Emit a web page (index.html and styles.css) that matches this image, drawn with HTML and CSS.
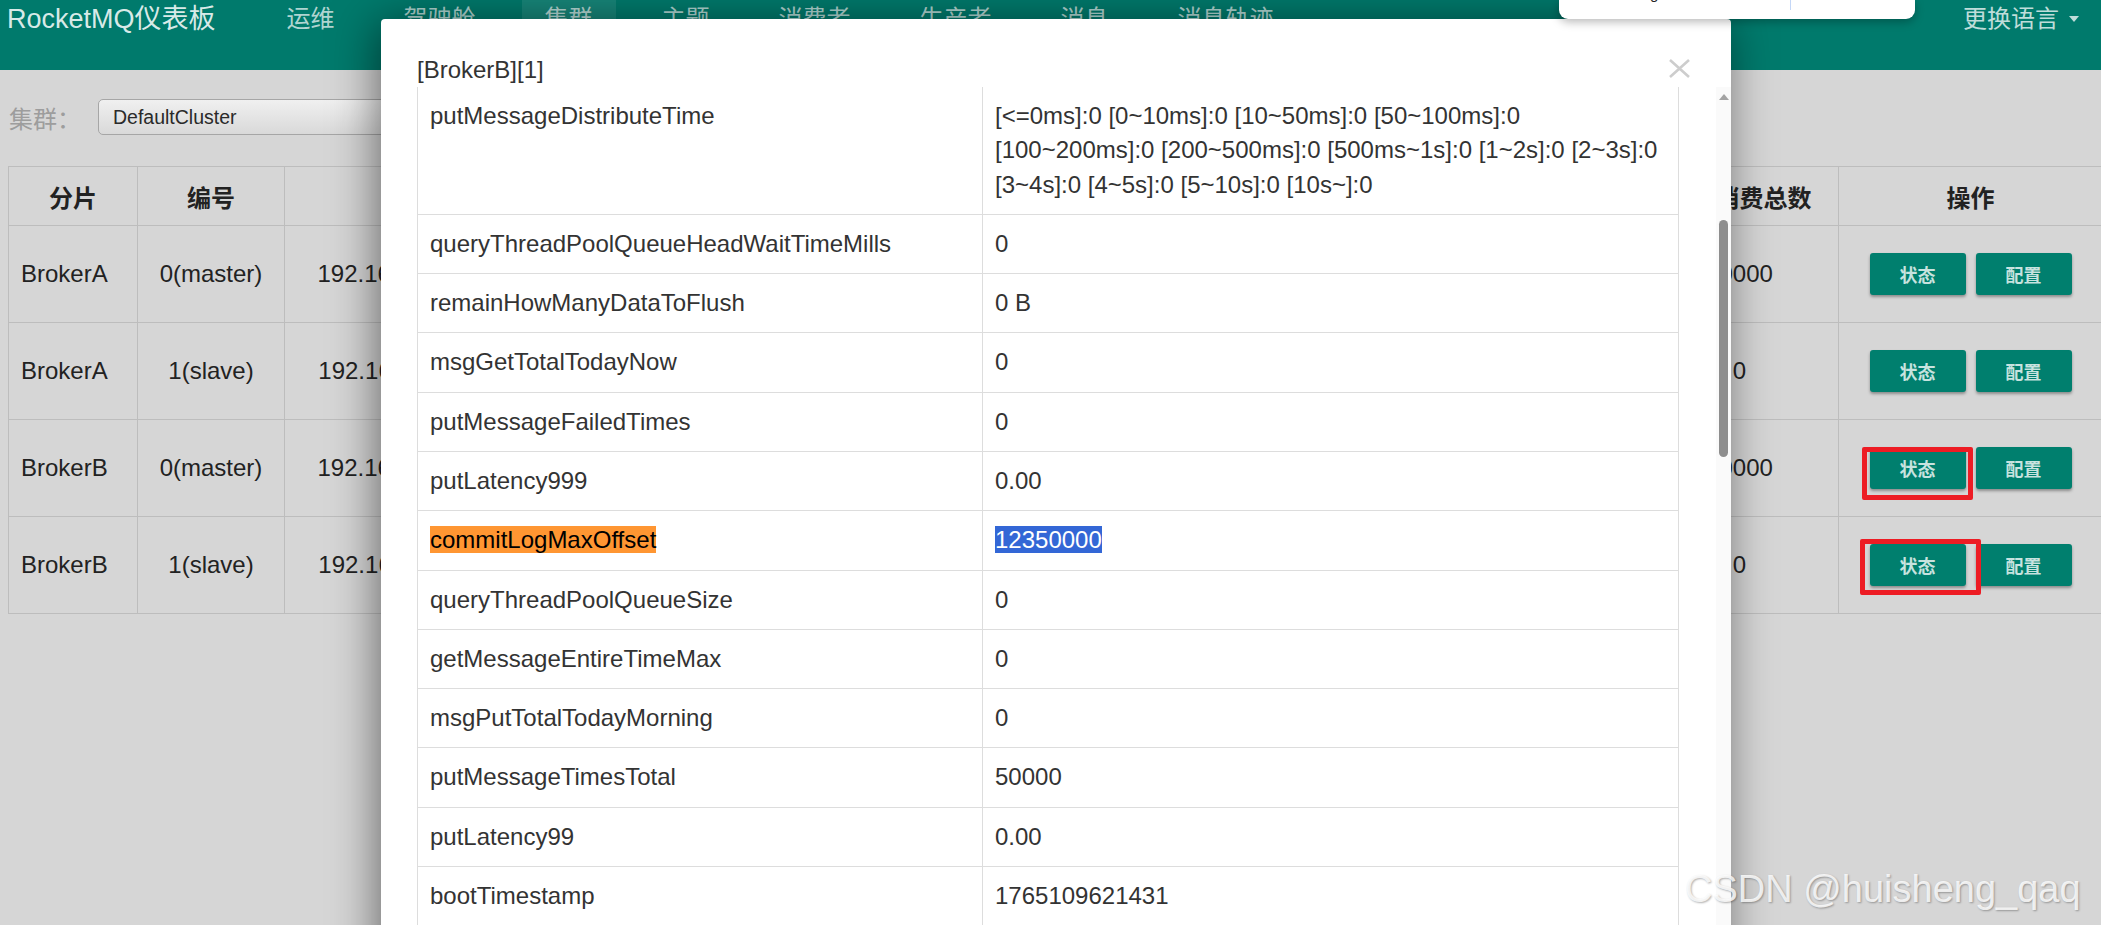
FILE: index.html
```html
<!DOCTYPE html>
<html lang="zh-CN">
<head>
<meta charset="utf-8">
<title>RocketMQ仪表板</title>
<link rel="stylesheet" href="styles.css">
</head>
<body>
<header class="navbar">
  <div class="brand">RocketMQ仪表板</div>
  <nav class="nav">
    <a class="nav-item">运维</a>
    <a class="nav-item">驾驶舱</a>
    <a class="nav-item active">集群</a>
    <a class="nav-item">主题</a>
    <a class="nav-item">消费者</a>
    <a class="nav-item">生产者</a>
    <a class="nav-item">消息</a>
    <a class="nav-item">消息轨迹</a>
  </nav>
  <div class="lang">更换语言<span class="caret"></span></div>
</header>

<main class="content">
  <div class="filter">
    <label class="filter-label">集群：</label>
    <div class="select">DefaultCluster</div>
  </div>
  <table class="cluster">
    <colgroup>
      <col class="c-shard"><col class="c-no"><col class="c-addr"><col class="c-mid"><col class="c-mid"><col class="c-mid"><col class="c-mid"><col class="c-mid"><col class="c-mid"><col class="c-today"><col class="c-ops">
    </colgroup>
    <thead>
      <tr><th>分片</th><th>编号</th><th>地址</th><th>版本</th><th>生产消息TPS</th><th>消费消息TPS</th><th>昨日生产总数</th><th>昨日消费总数</th><th>今天生产总数</th><th>今天消费总数</th><th>操作</th></tr>
    </thead>
    <tbody>
      <tr><td class="name">BrokerA</td><td>0(master)</td><td>192.168.0.105:10911</td><td>V5_3_2</td><td>0.00</td><td>0.00</td><td>0</td><td>0</td><td>50000</td><td>50000</td><td><div class="ops"><span class="btn">状态</span><span class="btn">配置</span></div></td></tr>
      <tr><td class="name">BrokerA</td><td>1(slave)</td><td>192.168.0.105:11011</td><td>V5_3_2</td><td>0.00</td><td>0.00</td><td>0</td><td>0</td><td>0</td><td>0</td><td><div class="ops"><span class="btn">状态</span><span class="btn">配置</span></div></td></tr>
      <tr><td class="name">BrokerB</td><td>0(master)</td><td>192.168.0.106:10911</td><td>V5_3_2</td><td>0.00</td><td>0.00</td><td>0</td><td>0</td><td>50000</td><td>50000</td><td><div class="ops"><span class="btn">状态</span><span class="btn">配置</span></div></td></tr>
      <tr><td class="name">BrokerB</td><td>1(slave)</td><td>192.168.0.106:11011</td><td>V5_3_2</td><td>0.00</td><td>0.00</td><td>0</td><td>0</td><td>0</td><td>0</td><td><div class="ops"><span class="btn">状态</span><span class="btn">配置</span></div></td></tr>
    </tbody>
  </table>
</main>

<div class="modal">
  <div class="modal-header">
    <div class="modal-title">[BrokerB][1]</div>
    <svg class="close" width="21" height="19" viewBox="0 0 21 19"><path d="M1 1 L20 18 M20 1 L1 18" stroke="#cdcdcd" stroke-width="2.6" fill="none"/></svg>
  </div>
  <div class="modal-body">
    <div class="modal-scroll">
      <table class="stats">
        <colgroup><col class="key"><col></colgroup>
        <tbody>
          <tr><td>putMessageDistributeTime</td><td>[&lt;=0ms]:0 [0~10ms]:0 [10~50ms]:0 [50~100ms]:0 [100~200ms]:0 [200~500ms]:0 [500ms~1s]:0 [1~2s]:0 [2~3s]:0 [3~4s]:0 [4~5s]:0 [5~10s]:0 [10s~]:0</td></tr>
          <tr><td>queryThreadPoolQueueHeadWaitTimeMills</td><td>0</td></tr>
          <tr><td>remainHowManyDataToFlush</td><td>0 B</td></tr>
          <tr><td>msgGetTotalTodayNow</td><td>0</td></tr>
          <tr><td>putMessageFailedTimes</td><td>0</td></tr>
          <tr><td>putLatency999</td><td>0.00</td></tr>
          <tr><td><mark class="find">commitLogMaxOffset</mark></td><td><span class="selected">12350000</span></td></tr>
          <tr><td>queryThreadPoolQueueSize</td><td>0</td></tr>
          <tr><td>getMessageEntireTimeMax</td><td>0</td></tr>
          <tr><td>msgPutTotalTodayMorning</td><td>0</td></tr>
          <tr><td>putMessageTimesTotal</td><td>50000</td></tr>
          <tr><td>putLatency99</td><td>0.00</td></tr>
          <tr><td>bootTimestamp</td><td>1765109621431</td></tr>
          <tr><td>msgGetTotalYesterdayMorning</td><td>0</td></tr>
        </tbody>
      </table>
    </div>
    <div class="scrollbar">
      <span class="sb-arrow"></span>
      <span class="sb-thumb"></span>
    </div>
  </div>
</div>

<div class="findbar">
  <span class="find-text">commitLogMaxOffset</span>
  <span class="find-sep"></span>
</div>

<div class="annot annot-1"></div>
<div class="annot annot-2"></div>

<div class="watermark">CSDN @huisheng_qaq</div>
</body>
</html>
```

FILE: styles.css
```css
* { box-sizing: border-box; }

html, body {
  margin: 0;
  height: 100%;
}

body {
  position: relative;
  overflow: hidden;
  background: #d6d6d6;
  color: #222;
  font-family: "Liberation Sans", "Noto Sans CJK SC", sans-serif;
}

/* ---------- navbar ---------- */
.navbar {
  height: 70px;
  background: #007a6c;
  display: flex;
  align-items: flex-start;
}

.brand {
  padding-left: 7px;
  font-size: 27px;
  line-height: 38px;
  color: rgba(255, 255, 255, 0.86);
  white-space: nowrap;
}

.nav {
  display: flex;
  gap: 23px;
  margin-left: 48px;
}

.nav-item {
  height: 70px;
  padding: 0 23px;
  font-size: 24px;
  line-height: 38px;
  color: rgba(255, 255, 255, 0.7);
  white-space: nowrap;
}

.nav-item.active {
  background: #178679;
}

.lang {
  margin-left: auto;
  padding-right: 22px;
  display: flex;
  align-items: center;
  gap: 10px;
  font-size: 24px;
  line-height: 38px;
  color: rgba(255, 255, 255, 0.75);
}

.caret {
  width: 0;
  height: 0;
  border-left: 5.5px solid transparent;
  border-right: 5.5px solid transparent;
  border-top: 6px solid rgba(255, 255, 255, 0.75);
}

/* ---------- page content ---------- */
.content {
  padding: 29px 0 0 8px;
}

.filter {
  display: flex;
  align-items: center;
  height: 36px;
}

.filter-label {
  width: 89px;
  margin-left: 1px;
  font-size: 24px;
  color: #9d9d9d;
}

.select {
  width: 420px;
  height: 36px;
  padding-left: 14px;
  border: 1px solid #a6a6a6;
  border-radius: 5px;
  background: linear-gradient(#f0f0f0, #d9d9d9);
  font-size: 19.5px;
  line-height: 34px;
  color: #2a2a2a;
}

.cluster {
  margin-top: 31px;
  width: 2094px;
  table-layout: fixed;
  border-collapse: collapse;
  font-size: 24px;
  color: #222;
}

.c-shard { width: 129px; }
.c-no { width: 147px; }
.c-addr { width: 291px; }
.c-mid { width: 177.5px; }
.c-today { width: 198px; }
.c-ops { width: 264px; }

.cluster th,
.cluster td {
  border: 1px solid #bdbdbd;
  padding: 0 12px;
  text-align: center;
  white-space: nowrap;
  overflow: hidden;
}

.cluster th {
  height: 59px;
  font-weight: bold;
}

.cluster td {
  height: 97px;
}

.cluster td.name {
  text-align: left;
}

.ops {
  display: flex;
  justify-content: center;
  gap: 10px;
}

.btn {
  width: 96px;
  height: 42px;
  display: flex;
  align-items: center;
  justify-content: center;
  background: #007f6e;
  color: rgba(255, 255, 255, 0.78);
  font-size: 18px;
  font-weight: bold;
  border-radius: 3px;
  box-shadow: 0 2px 3px rgba(0, 0, 0, 0.35);
}

/* ---------- modal ---------- */
.modal {
  position: absolute;
  left: 381px;
  top: 19px;
  width: 1350px;
  height: 1000px;
  z-index: 10;
  display: flex;
  flex-direction: column;
  background: #fff;
  border-radius: 4px;
  box-shadow: -4px 4px 45px rgba(0, 0, 0, 0.5);
}

.modal-header {
  display: flex;
  justify-content: space-between;
  align-items: flex-start;
  padding: 34px 41px 0 36px;
}

.modal-title {
  font-size: 24px;
  line-height: 34px;
  color: #333;
}

.close {
  margin-top: 6px;
}

.modal-body {
  flex: 1;
  min-height: 0;
  display: flex;
}

.modal-scroll {
  flex: 1;
  padding: 0 37px 0 36px;
  overflow: hidden;
}

.scrollbar {
  width: 15px;
  display: flex;
  flex-direction: column;
  align-items: center;
  background: #fafafa;
}

.sb-arrow {
  margin-top: 7px;
  width: 0;
  height: 0;
  border-left: 5px solid transparent;
  border-right: 5px solid transparent;
  border-bottom: 6px solid #a3a3a3;
}

.sb-thumb {
  margin-top: 120px;
  width: 9px;
  height: 237px;
  border-radius: 5px;
  background: #8e8e8e;
}

.stats {
  width: 100%;
  table-layout: fixed;
  border-collapse: collapse;
  font-size: 24px;
  line-height: 1.42857;
  color: #333;
}

.stats col.key { width: 565px; }

.stats td {
  border: 1px solid #ddd;
  padding: 12px;
  vertical-align: top;
}

.stats tr:first-child td {
  border-top: 0;
}

mark.find {
  background: #ff9632;
  color: #000;
}

.selected {
  background: #3367d6;
  color: #fff;
}

/* ---------- browser find bar (cut off at top) ---------- */
.findbar {
  position: absolute;
  left: 1559px;
  top: 0;
  width: 356px;
  height: 19px;
  z-index: 20;
  overflow: hidden;
  background: #fff;
  border-radius: 0 0 9px 9px;
  box-shadow: 0 3px 10px rgba(0, 0, 0, 0.28);
}

.find-text {
  position: absolute;
  left: 26px;
  top: -15px;
  font-size: 15px;
  line-height: 18px;
  color: #222;
  white-space: nowrap;
}

.find-sep {
  position: absolute;
  left: 231px;
  top: 0;
  width: 1px;
  height: 10px;
  background: #c4d7f7;
}

/* ---------- red annotation boxes ---------- */
.annot {
  position: absolute;
  z-index: 25;
  border: 5px solid #ed1c24;
  border-radius: 2px;
}

.annot-1 { left: 1862px; top: 447px; width: 111px; height: 53px; }
.annot-2 { left: 1860px; top: 539px; width: 121px; height: 56px; }

/* ---------- watermark ---------- */
.watermark {
  position: absolute;
  left: 1685px;
  top: 867px;
  z-index: 30;
  font-size: 38px;
  line-height: 44px;
  color: rgba(255, 255, 255, 0.82);
  text-shadow: 1px 1px 2px rgba(0, 0, 0, 0.3);
  white-space: nowrap;
}
```
